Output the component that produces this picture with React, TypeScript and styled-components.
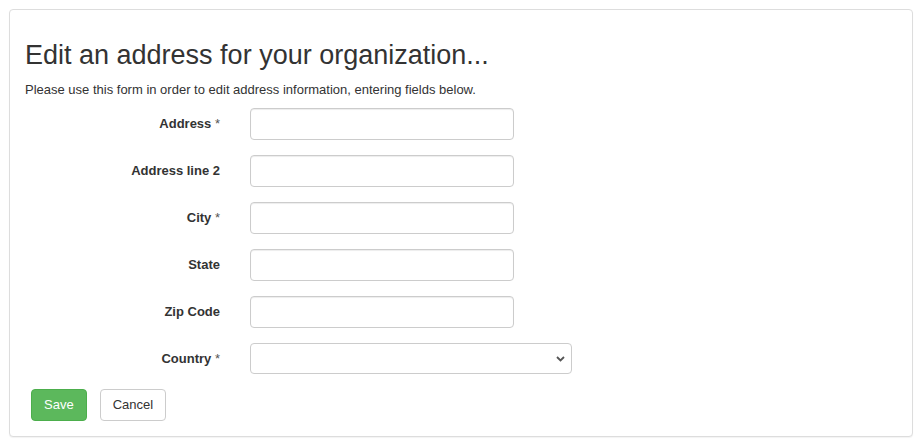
import React from "react";
import styled, { createGlobalStyle } from "styled-components";

const GlobalStyle = createGlobalStyle`
  body {
    margin: 0;
    background: #fff;
    font-family: "Liberation Sans", Arial, sans-serif;
    color: #333;
  }
`;

const Page = styled.div`
  padding: 9px 7px 9px 9px;
`;

const Panel = styled.div`
  border: 1px solid #ddd;
  border-radius: 4px;
  box-shadow: 0 1px 1px rgba(0, 0, 0, 0.05);
  padding: 15px;
  background: #fff;
`;

const Title = styled.h1`
  margin: 16px 0 10px;
  font-size: 27px;
  font-weight: 400;
  line-height: 1.1;
  color: #333;
`;

const Intro = styled.p`
  margin: 0 0 10px;
  font-size: 13px;
  line-height: 17px;
`;

const Form = styled.form`
  display: flex;
  flex-direction: column;
  gap: 15px;
`;

const Row = styled.div`
  display: flex;
  align-items: center;
  gap: 30px;
`;

const Label = styled.label`
  width: 195px;
  flex-shrink: 0;
  text-align: right;
  font-size: 13px;
  font-weight: 700;
  color: #333;
`;

const Required = styled.span`
  font-weight: 400;
  color: #555;
`;

const Input = styled.input<{ $width?: number }>`
  box-sizing: border-box;
  width: ${({ $width }) => $width ?? 264}px;
  height: 32px;
  padding: 6px 12px;
  border: 1px solid #ccc;
  border-radius: 4px;
  font: inherit;
  font-size: 13px;
  color: #555;
  background: #fff;
  box-shadow: inset 0 1px 1px rgba(0, 0, 0, 0.075);
`;

const SelectWrap = styled.div`
  position: relative;
  width: 322px;
  height: 31px;
`;

const Select = styled.select`
  box-sizing: border-box;
  width: 100%;
  height: 100%;
  padding: 5px 12px;
  border: 1px solid #ccc;
  border-radius: 4px;
  background: #fff;
  font: inherit;
  font-size: 13px;
  appearance: none;
  -webkit-appearance: none;
`;

const Chevron = styled.svg`
  position: absolute;
  right: 7px;
  top: 13px;
  pointer-events: none;
`;

const Actions = styled.div`
  display: flex;
  gap: 13px;
  padding-left: 6px;
`;

const Button = styled.button<{ $primary?: boolean }>`
  box-sizing: border-box;
  height: 32px;
  padding: 0 12px;
  border-radius: 4px;
  border: 1px solid ${({ $primary }) => ($primary ? "#4cae4c" : "#ccc")};
  background: ${({ $primary }) => ($primary ? "#5cb85c" : "#fff")};
  color: ${({ $primary }) => ($primary ? "#fff" : "#333")};
  font-family: "Liberation Sans", Arial, sans-serif;
  font-size: 13px;
  cursor: pointer;
`;

const fields = [
  { label: "Address", required: true },
  { label: "Address line 2" },
  { label: "City", required: true },
  { label: "State" },
  { label: "Zip Code" },
];

export default function App() {
  return (
    <>
      <GlobalStyle />
      <Page>
        <Panel>
          <Title>Edit an address for your organization...</Title>
          <Intro>
            Please use this form in order to edit address information, entering fields below.
          </Intro>
          <Form onSubmit={(e) => e.preventDefault()}>
            {fields.map((f) => (
              <Row key={f.label}>
                <Label>
                  {f.label}
                  {f.required && <Required> *</Required>}
                </Label>
                <Input type="text" />
              </Row>
            ))}
            <Row>
              <Label>
                Country<Required> *</Required>
              </Label>
              <SelectWrap>
                <Select defaultValue="">
                  <option value=""></option>
                </Select>
                <Chevron width="9" height="6" viewBox="0 0 9 6">
                  <path d="M1 1l3.5 3.5L8 1" fill="none" stroke="#555" strokeWidth="1.8" />
                </Chevron>
              </SelectWrap>
            </Row>
            <Actions>
              <Button type="submit" $primary>
                Save
              </Button>
              <Button type="button">Cancel</Button>
            </Actions>
          </Form>
        </Panel>
      </Page>
    </>
  );
}
